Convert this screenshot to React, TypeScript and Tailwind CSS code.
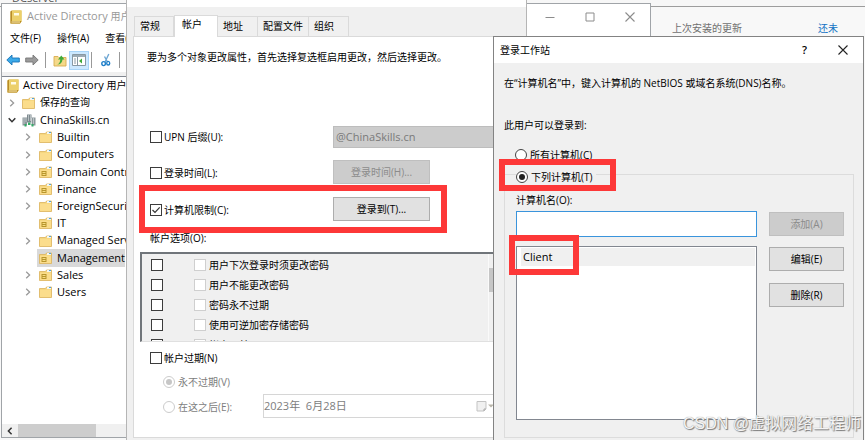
import type { ReactNode } from "react";
import clsx from "clsx";

const uiFont = "font-['Open_Sans','Noto_Sans_CJK_SC',sans-serif]";

function Check({ id, checked, faint, label }: { id: string; checked?: boolean; faint?: boolean; label: string }) {
  return (
    <span className="grid size-3 shrink-0">
      <input
        id={id}
        type="checkbox"
        aria-label={label}
        defaultChecked={checked}
        disabled={faint}
        className={clsx(
          "col-start-1 row-start-1 size-3 appearance-none border bg-white",
          faint ? "border-[#cfcfcf]" : "border-[#3c3c3c]",
        )}
      />
      {checked && (
        <svg viewBox="0 0 12 12" className="pointer-events-none col-start-1 row-start-1 size-3">
          <path d="M2.5 6 5 8.5 9.7 3.4" fill="none" stroke="#333" strokeWidth="1.2" />
        </svg>
      )}
    </span>
  );
}

function Radio({ id, name, checked, disabled }: { id: string; name: string; checked?: boolean; disabled?: boolean }) {
  return (
    <span className="grid size-3 shrink-0">
      <input
        id={id}
        name={name}
        type="radio"
        defaultChecked={checked}
        disabled={disabled}
        className={clsx(
          "col-start-1 row-start-1 size-3 appearance-none rounded-full border bg-white",
          disabled ? "border-[#cccccc]" : "border-[#444444]",
        )}
      />
      {checked && (
        <span
          className={clsx(
            "pointer-events-none col-start-1 row-start-1 size-1.5 place-self-center rounded-full",
            disabled ? "bg-[#c6c6c6]" : "bg-[#222222]",
          )}
        />
      )}
    </span>
  );
}

function PushButton({ children, disabled, className }: { children: ReactNode; disabled?: boolean; className?: string }) {
  return (
    <button
      type="button"
      disabled={disabled}
      className={clsx(
        "h-6 border text-center",
        disabled ? "border-[#bfbfbf] bg-[#cccccc] text-[#8b8b8b]" : "border-[#adadad] bg-[#e1e1e1] text-black",
        className,
      )}
    >
      {children}
    </button>
  );
}

function BookIcon() {
  return (
    <svg viewBox="0 0 12 14" className="h-3.5 w-3 shrink-0">
      <path d="M.5 1.5 2 .5h9.500v11L10 13.500H.5z" fill="#d9b33c" />
      <path d="M2 .5h9.500v10.500H2z" fill="#ecd06a" />
      <path d="M4 3h5v2.500H4z" fill="#fffbe6" />
      <path d="M.5 1.500v12H10l1.500-2.500H2V.5z" fill="#b88c26" />
      <path d="M1.500 12h8.500" stroke="#fff2bd" strokeWidth="1" />
    </svg>
  );
}

function FolderIcon({ unit }: { unit?: boolean }) {
  return (
    <svg viewBox="0 0 13 12" className="h-3 w-[13px] shrink-0">
      <path d="M.5 2.500h6l1-1.500h5v10.500H.5z" fill="#f6d77f" stroke="#dcb35a" strokeWidth=".8" />
      <path d="M8 1h4v2H8z" fill="#f3f6f4" />
      <path d="M10 1h2v1h-2z" fill="#4fa3dc" />
      <path d="M1 4h11v7H1z" fill="#fbdd8c" />
      {unit && (
        <>
          <path d="M2.500 5h5v5h-5z" fill="#b8952c" />
          <path d="M3.500 6h3v1h-3zm0 2h3v1h-3z" fill="#f7dd83" />
        </>
      )}
    </svg>
  );
}

function DomainIcon() {
  return (
    <svg viewBox="0 0 14 13" className="h-[13px] w-3.5 shrink-0">
      <path d="M5 .5h4.500v8H5z" fill="#7d898e" />
      <path d="M.5 3.500H5v8H.5zm9 0h4v8h-4z" fill="#8c979b" />
      <path d="M6 2h1m1 0h1M6 4h1m1 0h1M6 6h1m1 0h1M1.500 5h1m1 0h1m-3 2h1m1 0h1m-3 2h1m6.500-4h1m1 0h1m-3 2h1m1 0h1m-3 2h1m1 0h1" stroke="#eef3f4" />
      <path d="M2.500 10h2v2.500h-2zm3.500-1.500h2.500V11H6zM9.500 10h2v2.500h-2z" fill="#35a968" />
    </svg>
  );
}

function Chevron({ open }: { open?: boolean }) {
  return (
    <svg viewBox="0 0 8 8" className="size-2 shrink-0">
      {open ? (
        <path d="M.7 2.200 4 5.700 7.300 2.200" fill="none" stroke="#333" strokeWidth="1.500" />
      ) : (
        <path d="M2.200.8 5.600 4 2.200 7.200" fill="none" stroke="#9a9a9a" strokeWidth="1.300" />
      )}
    </svg>
  );
}

function CloseIcon({ className }: { className: string }) {
  return (
    <svg viewBox="0 0 10 10" className={clsx("size-2.5", className)}>
      <path d="M.5.5l9 9M9.500.5l-9 9" fill="none" stroke="currentColor" strokeWidth="1.100" />
    </svg>
  );
}

const containers = [
  { name: "Builtin", expandable: true },
  { name: "Computers", expandable: true },
  { name: "Domain Controllers", expandable: true, unit: true },
  { name: "Finance", expandable: true, unit: true },
  { name: "ForeignSecurityPrincipals", expandable: true },
  { name: "IT", unit: true },
  { name: "Managed Service Accounts", expandable: true },
  { name: "Management", unit: true, selected: true },
  { name: "Sales", expandable: true, unit: true },
  { name: "Users", expandable: true },
];

function ConsoleWindow() {
  return (
    <section className="absolute top-[3px] bottom-0.5 left-px flex w-[650px] flex-col border border-[#a0a4a8] bg-white">
      <header className="flex h-[25px] shrink-0 items-center">
        <h1 className="flex flex-1 items-center gap-[5px] pl-2 text-[11px] whitespace-nowrap text-[#999999]">
          <BookIcon />
          <span>
            Active Directory <span className="text-[10px]">用户和计算机</span>
          </span>
        </h1>
        <div className="flex items-center gap-[30px] pr-[15px] text-[#8c8c8c]">
          <button type="button" aria-label="最小化">
            <svg viewBox="0 0 10 10" className="size-2.5">
              <path d="M.5 5.500h9" stroke="currentColor" />
            </svg>
          </button>
          <button type="button" aria-label="最大化">
            <svg viewBox="0 0 10 10" className="size-2.5">
              <path d="M1 1h8v8H1z" fill="none" stroke="currentColor" />
            </svg>
          </button>
          <button type="button" aria-label="关闭">
            <CloseIcon className="text-[#8c8c8c]" />
          </button>
        </div>
      </header>
      <nav className="flex h-[19px] shrink-0 items-center gap-4 pl-2 text-[10px] whitespace-nowrap">
        <button type="button">文件(F)</button>
        <button type="button">操作(A)</button>
        <button type="button">查看(V)</button>
      </nav>
      <div className="flex h-6 shrink-0 items-center pl-1">
        <button type="button" aria-label="后退">
          <svg viewBox="0 0 14 12" className="h-3 w-3.5">
            <path d="M.8 6 6 1v3h7.300v4H6v3z" fill="#3ba9e8" stroke="#1b75b8" strokeWidth=".9" />
          </svg>
        </button>
        <button type="button" aria-label="前进" className="ml-[5px]">
          <svg viewBox="0 0 14 12" className="h-3 w-3.5">
            <path d="M13.200 6 8 1v3H.7v4H8v3z" fill="#9b9b9b" stroke="#767676" strokeWidth=".9" />
          </svg>
        </button>
        <span className="ml-1.5 h-4 w-px bg-[#999999]" />
        <button type="button" aria-label="上一级" className="ml-[7px]">
          <svg viewBox="0 0 14 14" className="size-3.5">
            <path d="M1 3.500h4l1 1h7v8.500H1z" fill="#f5d98a" stroke="#d8ad50" strokeWidth=".9" />
            <path d="M4 11.500c2-.5 3-2 3.300-5H5L8.300 2.500 11.500 6.500H9.500c-.3 3-2 5-5.500 5z" fill="#3faa3a" />
          </svg>
        </button>
        <button
          type="button"
          aria-label="显示树"
          className="ml-0.5 flex h-[19px] w-5 items-center justify-center border border-[#a8d4f8] bg-[#cce8ff]"
        >
          <svg viewBox="0 0 14 12" className="h-3 w-3.5">
            <path d="M.5.5h13v11H.5z" fill="#fff" stroke="#8898a3" />
            <path d="M1 1h12v2H1z" fill="#9cabb6" />
            <path d="M5.500 3v8" stroke="#8898a3" />
            <path d="M2 5h2M2 7h2M2 9h2" stroke="#8898a3" />
            <path d="M10 4.500v5L7 7z" fill="#3faa3a" />
          </svg>
        </button>
        <span className="ml-0.5 h-4 w-px bg-[#999999]" />
        <button type="button" aria-label="剪切" className="ml-2">
          <svg viewBox="0 0 12 14" className="h-3.5 w-3">
            <path d="M8.800 1 5 9M4.500 3.500 7.500 9" stroke="#6fa7d3" strokeWidth="1.400" />
            <ellipse cx="3.600" cy="10.600" rx="1.800" ry="2" fill="none" stroke="#1f7fc9" strokeWidth="1.400" />
            <ellipse cx="8.200" cy="10.200" rx="1.500" ry="1.800" fill="none" stroke="#1f7fc9" strokeWidth="1.400" />
          </svg>
        </button>
        <span className="ml-[7px] h-4 w-px bg-[#999999]" />
        <CloseIcon className="ml-[7px] text-[#d44444]" />
      </div>
      <div className="h-1 shrink-0 bg-[#f0f0f0]" />
      <div className="flex min-h-0 flex-1 flex-col border-t border-[#828790]">
        <ul className="grid h-56 shrink-0 auto-rows-fr text-[11px] whitespace-nowrap">
          <li className="flex items-center gap-1 pl-[5px]">
            <BookIcon />
            <span>
              Active Directory <span className="text-[10px]">用户和计算机</span>
            </span>
          </li>
          <li className="flex items-center gap-1.5 pl-1.5">
            <Chevron />
            <span className="flex items-center gap-[5px]">
              <FolderIcon />
              <span className="text-[10px]">保存的查询</span>
            </span>
          </li>
          <li className="flex items-center pl-1.5">
            <Chevron open />
            <span className="ml-1.5 flex items-center gap-1">
              <DomainIcon />
              ChinaSkills.cn
            </span>
          </li>
          {containers.map((c) => (
            <li key={c.name} className="flex items-center pl-[22px]">
              {c.expandable ? <Chevron /> : <span className="w-2" />}
              <span className={clsx("ml-[5px] flex h-full items-center gap-[5px] pl-0.5", c.selected && "w-[88px] bg-[#d9d9d9]")}>
                <FolderIcon unit={c.unit} />
                {c.name}
              </span>
            </li>
          ))}
        </ul>
        <div className="mt-auto flex h-[13px] w-[124px] items-center bg-[#f0f0f0]">
          <button type="button" aria-label="向左滚动" className="flex w-4 justify-center">
            <svg viewBox="0 0 8 8" className="size-2">
              <path d="M5.600.8 2.400 4l3.200 3.200" fill="none" stroke="#333" strokeWidth="1.500" />
            </svg>
          </button>
          <span className="h-full w-[78px] bg-[#cdcdcd]" />
        </div>
      </div>
    </section>
  );
}

const options = ["用户下次登录时须更改密码", "用户不能更改密码", "密码永不过期", "使用可逆加密存储密码", "帐户已禁用"];

function PropertiesDialog() {
  return (
    <section className="absolute inset-y-0 left-[126px] flex w-[401px] flex-col border-x border-[#b5b5b5] bg-[#f0f0f0] pb-0.5 text-[10px]">
      <div className="h-[7px] shrink-0 bg-white" />
      <div role="tablist" className="mt-2 flex h-[21px] shrink-0 items-end pl-[7px]">
        {["常规", "帐户", "地址", "配置文件", "组织"].map((tab) =>
          tab === "帐户" ? (
            <button
              key={tab}
              type="button"
              role="tab"
              aria-selected="true"
              className="z-10 -mb-px h-[22px] w-11 border border-b-0 border-[#dadada] bg-white pb-1 pl-[7px] text-left"
            >
              {tab}
            </button>
          ) : (
            <button
              key={tab}
              type="button"
              role="tab"
              aria-selected="false"
              className={clsx(
                "h-5 border border-b-0 border-l-0 border-[#dadada] pl-[5px] text-left first:border-l",
                tab === "配置文件" ? "w-[51px]" : "w-10",
              )}
            >
              {tab}
            </button>
          ),
        )}
      </div>
      <div className="ml-1.5 flex min-h-0 flex-1 flex-col overflow-hidden border border-[#dadada] bg-white">
        <p className="mt-3 ml-[13px] h-4 leading-4">要为多个对象更改属性，首先选择复选框启用更改，然后选择更改。</p>
        <div className="mt-[61px] ml-4 flex h-[22px] items-center">
          <label htmlFor="upn" className="flex w-[183px] items-center gap-0.5">
            <Check id="upn" label="UPN 后缀(U)" />
            UPN 后缀(U):
          </label>
          <select
            disabled
            aria-label="UPN 后缀"
            className="h-[22px] w-[180px] appearance-none border border-[#bdbdbd] bg-[#cccccc] pl-0.5 text-[11px] text-[#7a7a7a] opacity-100"
          >
            <option>@ChinaSkills.cn</option>
          </select>
        </div>
        <div className="mt-3 ml-4 flex h-6 items-center">
          <label htmlFor="hours" className="flex w-[183px] items-center gap-0.5 pt-0.5">
            <Check id="hours" label="登录时间(L)" />
            登录时间(L):
          </label>
          <PushButton disabled className="w-[97px]">登录时间(H)...</PushButton>
        </div>
        <div className="mt-[13px] ml-4 flex h-6 items-center">
          <label htmlFor="limit" className="flex w-[183px] items-center gap-0.5 pt-0.5">
            <Check id="limit" checked label="计算机限制(C)" />
            计算机限制(C):
          </label>
          <PushButton className="w-[97px]">登录到(T)...</PushButton>
        </div>
        <p className="mt-[9px] ml-4 h-4 leading-4">帐户选项(O):</p>
        <div className="mt-1.5 ml-1.5 flex h-[90px] shrink-0 border-t-2 border-b border-l-2 border-t-[#70757a] border-b-[#e0e0e0] border-l-[#70757a] bg-[#f0f0f0]">
          <ul className="flex-1 overflow-hidden pt-px pl-[9px]">
            {options.map((text, i) => (
              <li key={text} className="flex h-5 items-center">
                <Check id={`apply-${i}`} label={`更改：${text}`} />
                <label htmlFor={`option-${i}`} className="ml-[31px] flex items-center gap-[3px]">
                  <Check id={`option-${i}`} faint label={text} />
                  {text}
                </label>
              </li>
            ))}
          </ul>
          <div className="w-[37px] border-l border-[#fafafa] pt-3.5">
            <span className="block h-6 w-3 bg-[#c6c6c6]" />
          </div>
        </div>
        <label htmlFor="expires" className="mt-2 ml-4 flex h-4 items-center gap-0.5">
          <Check id="expires" label="帐户过期(N)" />
          帐户过期(N)
        </label>
        <label htmlFor="never" className="mt-2 ml-[29px] flex h-4 items-center gap-[3px] text-[#7d7d7d]">
          <Radio id="never" name="expiry" checked disabled />
          永不过期(V)
        </label>
        <div className="mt-1 ml-[29px] flex h-6 items-center text-[#7d7d7d]">
          <label htmlFor="after" className="flex w-[100px] items-center gap-[3px] pt-0.5">
            <Radio id="after" name="expiry" disabled />
            在这之后(E):
          </label>
          <div className="flex h-6 w-[240px] items-center border border-[#d6d6d6]">
            <input aria-label="过期日期" disabled defaultValue="2023年  6月28日" className="w-[212px] text-[11px] whitespace-pre" />
            <svg viewBox="0 0 18 12" className="h-3 w-[18px]">
              <path d="M1 1.500h9v7l-2 2.500H1z" fill="#f0f0f0" stroke="#c3c3c3" />
              <path d="M8 11V9h2" fill="none" stroke="#a9a9a9" />
              <path d="M12 4.500h6l-3 3z" fill="#b9b5aa" />
            </svg>
          </div>
        </div>
      </div>
    </section>
  );
}

function LogonDialog() {
  return (
    <section className="absolute top-9 -bottom-4 left-[493px] flex w-[371px] flex-col border border-[#838383] bg-[#f0f0f0] text-[10px]">
      <header className="flex h-[26px] shrink-0 items-center bg-white pr-[15px] pl-1.5">
        <h2 className="flex-1">登录工作站</h2>
        <button type="button" aria-label="帮助" className="text-[11px] font-semibold">
          ?
        </button>
        <button type="button" aria-label="关闭" className="ml-[31px]">
          <CloseIcon className="text-[#222222]" />
        </button>
      </header>
      <p className="mt-3 ml-2.5 h-4 leading-4">在“计算机名”中，键入计算机的 NetBIOS 或域名系统(DNS)名称。</p>
      <p className="mt-[26px] ml-2.5 h-4 leading-4">此用户可以登录到:</p>
      <label htmlFor="all" className="mt-3.5 ml-[21px] flex h-4 items-center gap-[3px]">
        <Radio id="all" name="scope" />
        所有计算机(C)
      </label>
      <fieldset className="mr-[9px] ml-2.5 flex h-[275px] min-w-0 flex-col border border-[#dcdcdc] pl-[11px]">
        <legend className="pt-1.5">
          <label htmlFor="selected" className="flex h-4 items-center gap-[3px] pr-1">
            <Radio id="selected" name="scope" checked />
            下列计算机(T)
          </label>
        </legend>
        <div className="flex gap-3">
          <div className="w-[241px]">
            <label htmlFor="computer" className="mt-[7px] block h-4 leading-4">
              计算机名(O):
            </label>
            <input
              id="computer"
              type="text"
              className="mt-[3px] block h-[26px] w-full border border-[#3a94dc] bg-white px-1 outline-none"
            />
            <ul role="listbox" aria-label="计算机" className="mt-[9px] h-[174px] border border-[#828790] bg-white p-px pl-1">
              <li role="option" aria-selected="true" className="h-[18px] bg-[#f0f0f0] pl-0.5 text-[11px] leading-[18px]">
                Client
              </li>
            </ul>
          </div>
          <div className="mt-[27px] flex flex-col">
            <PushButton disabled className="w-[75px]">添加(A)</PushButton>
            <PushButton className="mt-[11px] w-[75px]">编辑(E)</PushButton>
            <PushButton className="mt-3 w-[75px]">删除(R)</PushButton>
          </div>
        </div>
      </fieldset>
    </section>
  );
}

export default function App() {
  return (
    <main className={clsx("relative h-screen w-full overflow-hidden bg-[#f7f7f7] text-black", uiFont)}>
      <div className="absolute inset-x-0 top-1.5 bottom-0 flex justify-end border-t border-[#9d9d9d] bg-[#f8f8f8] pt-3.5 text-[10px]">
        <p className="w-[146px] text-[#707070]">上次安装的更新</p>
        <a href="#updates" className="w-[47px] text-[#1473c4]">
          还未
        </a>
      </div>
      <p className="absolute -top-2 left-3 text-[11px] leading-3 text-[#555555]">DCserver</p>
      <ConsoleWindow />
      <PropertiesDialog />
      <LogonDialog />
      <div className="pointer-events-none absolute top-[185px] left-[139px] h-12 w-[308px] border-6 border-[#fd3838]" />
      <div className="pointer-events-none absolute top-[159px] left-[499px] h-8 w-[117px] border-6 border-[#fd3838]" />
      <div className="pointer-events-none absolute top-[235px] left-[509px] h-10 w-[70px] border-6 border-[#fd3838]" />
      <p className="pointer-events-none absolute right-1 bottom-1 font-['Liberation_Sans','Noto_Sans_CJK_SC',sans-serif] text-base leading-6 whitespace-nowrap text-[#f4f4f4] [text-shadow:1px_1px_1px_#777,0_0_1px_#888]">
        CSDN @虚拟网络工程师
      </p>
    </main>
  );
}
